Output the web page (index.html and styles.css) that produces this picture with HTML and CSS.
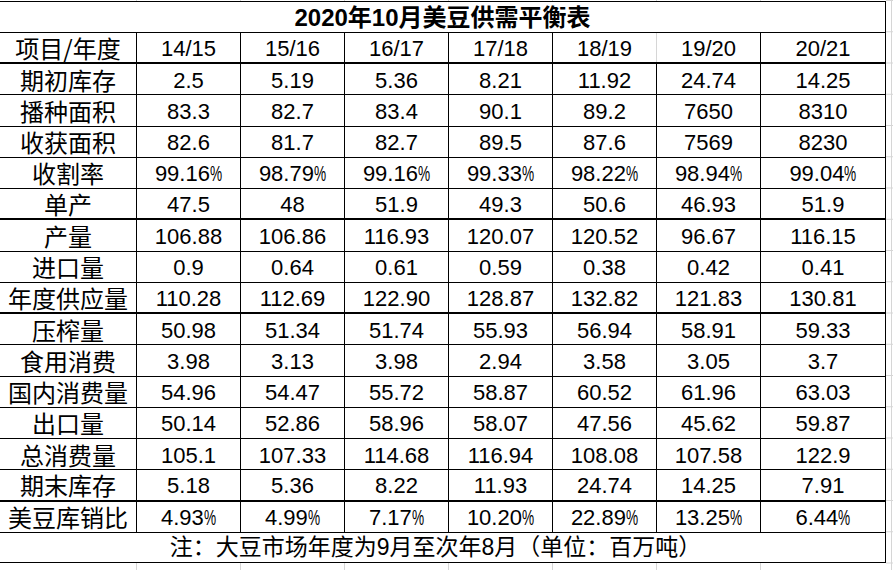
FILE: index.html
```html
<!DOCTYPE html>
<html lang="zh-CN">
<head>
<meta charset="utf-8">
<title>2020年10月美豆供需平衡表</title>
<link rel="stylesheet" href="styles.css">
</head>
<body>
<div class="sheet">
  <div class="row title"><div class="cell span">2020年10月美豆供需平衡表</div></div>
  <div class="row head thick">
    <div class="cell label">项目/年度</div>
    <div class="cell">14/15</div><div class="cell">15/16</div><div class="cell">16/17</div><div class="cell">17/18</div><div class="cell open">18/19</div><div class="cell">19/20</div><div class="cell">20/21</div>
  </div>
  <div class="row data">
    <div class="cell label">期初库存</div>
    <div class="cell">2.5</div><div class="cell">5.19</div><div class="cell">5.36</div><div class="cell">8.21</div><div class="cell">11.92</div><div class="cell">24.74</div><div class="cell">14.25</div>
  </div>
  <div class="row data">
    <div class="cell label">播种面积</div>
    <div class="cell">83.3</div><div class="cell">82.7</div><div class="cell">83.4</div><div class="cell">90.1</div><div class="cell">89.2</div><div class="cell">7650</div><div class="cell">8310</div>
  </div>
  <div class="row data">
    <div class="cell label">收获面积</div>
    <div class="cell">82.6</div><div class="cell">81.7</div><div class="cell">82.7</div><div class="cell">89.5</div><div class="cell">87.6</div><div class="cell">7569</div><div class="cell">8230</div>
  </div>
  <div class="row data">
    <div class="cell label">收割率</div>
    <div class="cell">99.16<span class="pct">%</span></div><div class="cell">98.79<span class="pct">%</span></div><div class="cell">99.16<span class="pct">%</span></div><div class="cell">99.33<span class="pct">%</span></div><div class="cell">98.22<span class="pct">%</span></div><div class="cell">98.94<span class="pct">%</span></div><div class="cell">99.04<span class="pct">%</span></div>
  </div>
  <div class="row data thick">
    <div class="cell label">单产</div>
    <div class="cell">47.5</div><div class="cell">48</div><div class="cell">51.9</div><div class="cell">49.3</div><div class="cell">50.6</div><div class="cell">46.93</div><div class="cell">51.9</div>
  </div>
  <div class="row data">
    <div class="cell label">产量</div>
    <div class="cell">106.88</div><div class="cell">106.86</div><div class="cell">116.93</div><div class="cell">120.07</div><div class="cell">120.52</div><div class="cell">96.67</div><div class="cell">116.15</div>
  </div>
  <div class="row data">
    <div class="cell label">进口量</div>
    <div class="cell">0.9</div><div class="cell">0.64</div><div class="cell">0.61</div><div class="cell">0.59</div><div class="cell">0.38</div><div class="cell">0.42</div><div class="cell">0.41</div>
  </div>
  <div class="row data thick">
    <div class="cell label">年度供应量</div>
    <div class="cell">110.28</div><div class="cell">112.69</div><div class="cell">122.90</div><div class="cell">128.87</div><div class="cell">132.82</div><div class="cell">121.83</div><div class="cell">130.81</div>
  </div>
  <div class="row data">
    <div class="cell label">压榨量</div>
    <div class="cell">50.98</div><div class="cell">51.34</div><div class="cell">51.74</div><div class="cell">55.93</div><div class="cell">56.94</div><div class="cell">58.91</div><div class="cell">59.33</div>
  </div>
  <div class="row data">
    <div class="cell label">食用消费</div>
    <div class="cell">3.98</div><div class="cell">3.13</div><div class="cell">3.98</div><div class="cell">2.94</div><div class="cell">3.58</div><div class="cell">3.05</div><div class="cell">3.7</div>
  </div>
  <div class="row data">
    <div class="cell label">国内消费量</div>
    <div class="cell">54.96</div><div class="cell">54.47</div><div class="cell">55.72</div><div class="cell">58.87</div><div class="cell">60.52</div><div class="cell">61.96</div><div class="cell">63.03</div>
  </div>
  <div class="row data">
    <div class="cell label">出口量</div>
    <div class="cell">50.14</div><div class="cell">52.86</div><div class="cell">58.96</div><div class="cell">58.07</div><div class="cell">47.56</div><div class="cell">45.62</div><div class="cell">59.87</div>
  </div>
  <div class="row data">
    <div class="cell label">总消费量</div>
    <div class="cell">105.1</div><div class="cell">107.33</div><div class="cell">114.68</div><div class="cell">116.94</div><div class="cell">108.08</div><div class="cell">107.58</div><div class="cell">122.9</div>
  </div>
  <div class="row data thick">
    <div class="cell label">期末库存</div>
    <div class="cell">5.18</div><div class="cell">5.36</div><div class="cell">8.22</div><div class="cell">11.93</div><div class="cell">24.74</div><div class="cell">14.25</div><div class="cell">7.91</div>
  </div>
  <div class="row data">
    <div class="cell label">美豆库销比</div>
    <div class="cell">4.93<span class="pct">%</span></div><div class="cell">4.99<span class="pct">%</span></div><div class="cell">7.17<span class="pct">%</span></div><div class="cell">10.20<span class="pct">%</span></div><div class="cell">22.89<span class="pct">%</span></div><div class="cell">13.25<span class="pct">%</span></div><div class="cell">6.44<span class="pct">%</span></div>
  </div>
  <div class="row foot"><div class="cell span">注：大豆市场年度为9月至次年8月（单位：百万吨）</div></div>
</div>
</body>
</html>
```
FILE: styles.css
```css
html, body {
  margin: 0;
  padding: 0;
  min-height: 570px;
}

body {
  background-color: #ffffff;
  background-image:
    linear-gradient(#d6d6d6, #d6d6d6),
    linear-gradient(#d6d6d6, #d6d6d6),
    linear-gradient(#d6d6d6, #d6d6d6),
    linear-gradient(#d6d6d6, #d6d6d6),
    linear-gradient(#d6d6d6, #d6d6d6),
    linear-gradient(#d6d6d6, #d6d6d6),
    linear-gradient(#d6d6d6, #d6d6d6),
    linear-gradient(#d6d6d6, #d6d6d6),
    repeating-linear-gradient(to bottom, transparent 0, transparent 30.25px, #d6d6d6 30.25px, #d6d6d6 31.25px);
  background-size:
    1px 100%, 1px 100%, 1px 100%, 1px 100%, 1px 100%, 1px 100%, 1px 100%, 1px 100%,
    8px 31.25px;
  background-position:
    136px 0, 240px 0, 344px 0, 448px 0, 552px 0, 656px 0, 760px 0, 891px 0,
    886px 1px;
  background-repeat: repeat-y;
  font-family: "Liberation Sans", "Noto Sans CJK SC", sans-serif;
  color: #000;
}

.sheet {
  width: 886px;
  margin-top: 1px;
  border-top: 1px solid #000;
  background: #fff;
}

.row {
  display: grid;
  grid-template-columns: 137px repeat(6, 104px) 125px;
  box-sizing: border-box;
  border-bottom: 1px solid #000;
  height: 31.25px;
}

.row.thick {
  border-bottom-width: 2px;
}

.row.title,
.row.head {
  height: 31px;
}

.row.foot {
  height: 30px;
}

.cell {
  box-sizing: border-box;
  border-right: 1px solid #000;
  display: flex;
  align-items: center;
  justify-content: center;
  padding-top: 3px;
  font-size: 22px;
  line-height: 1;
  white-space: nowrap;
}

.cell.open {
  border-right-color: #d6d6d6;
}

.cell.label {
  font-family: "Noto Sans CJK SC", sans-serif;
  font-size: 24px;
  padding-top: 1px;
}

.cell.span {
  grid-column: 1 / -1;
}

.title .cell {
  font-weight: bold;
  font-size: 24px;
  padding-top: 1px;
}

.foot .cell {
  font-size: 23px;
  padding-top: 0;
  padding-right: 14px;
}

.pct {
  display: inline-block;
  transform: scaleX(0.62);
  transform-origin: left center;
  margin-right: -7.4px;
}
```
